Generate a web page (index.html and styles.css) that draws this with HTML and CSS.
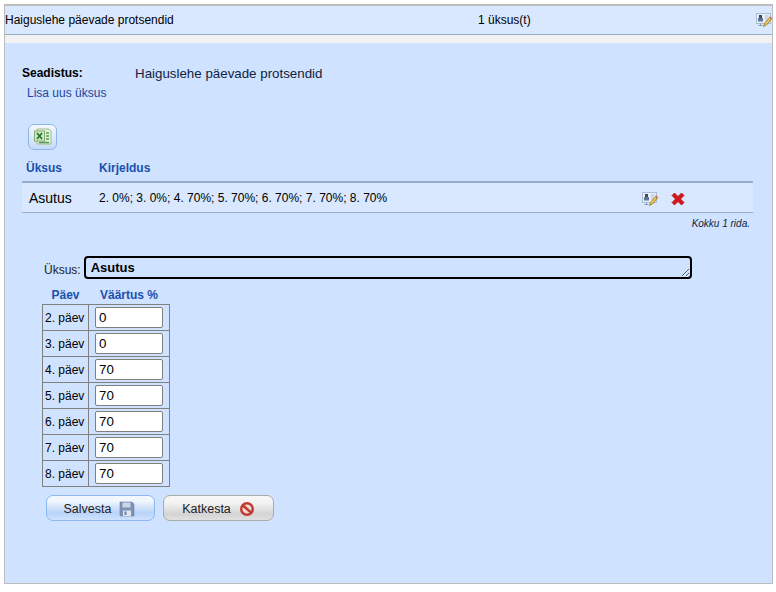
FILE: index.html
```html
<!DOCTYPE html>
<html lang="en">
<head>
    <meta charset="UTF-8">
    <title>Haiguslehe päevade protsendid</title>
    <link rel="stylesheet" href="styles.css">
</head>
<body>
    <svg class="icon-defs" width="0" height="0">
        <symbol id="edit" viewBox="0 0 16 14">
            <rect x="0.500" y="0.500" width="14" height="10" fill="#e8eff8" stroke="#a9bdd6"/>
            <rect x="3" y="2" width="3" height="3" fill="#3a4a66"/>
            <rect x="2" y="5" width="5" height="3.500" fill="#5f7392"/>
            <path d="M4.500 10.500v2M2.500 12.500h4" stroke="#8c9bb0" fill="none"/>
            <path d="M9 3h4M9 5h3M9 7h2" stroke="#b4c0cc" fill="none"/>
            <path d="M7.500 13.500l1-3 5-6 2 1.500-5 6z" fill="#f2c544" stroke="#6e5a1a" stroke-width="0.600"/>
            <path d="M14 3.500l2 1.500-0.800 1-2-1.500z" fill="#e2574c"/>
        </symbol>
    </svg>
    <div class="panel">
        <div class="panel-header">
            <span class="panel-title">Haiguslehe päevade protsendid</span>
            <span class="panel-count">1 üksus(t)</span>
            <svg class="icon-edit"><use href="#edit"/></svg>
        </div>
        <div class="panel-strip"></div>
        <div class="panel-body">
            <div class="setting">
                <span class="setting-label">Seadistus:</span>
                <span class="setting-value">Haiguslehe päevade protsendid</span>
            </div>
            <a class="add-link" href="#">Lisa uus üksus</a>
            <button class="excel-btn" type="button" title="Excel">
                <svg width="20" height="20" viewBox="0 0 20 20">
                    <path d="M4 2h12l2 2v13H4z" fill="#e6f0dc" stroke="#9fbf8e"/>
                    <rect x="1.500" y="4" width="10" height="10" fill="#d3e6c4" stroke="#86ad70"/>
                    <path d="M4 6l5 6M9 6l-5 6" stroke="#1f7a35" stroke-width="1.800" fill="none"/>
                    <path d="M13 6h3M13 9h3M13 12h3M6 15.500h10" stroke="#4f9a58" stroke-width="1.500" fill="none"/>
                </svg>
            </button>
            <div class="list-head">
                <span class="col-unit">Üksus</span>
                <span>Kirjeldus</span>
            </div>
            <div class="list-row">
                <span class="col-unit row-unit">Asutus</span>
                <span class="row-desc">2. 0%; 3. 0%; 4. 70%; 5. 70%; 6. 70%; 7. 70%; 8. 70%</span>
                <svg class="icon-edit row-icon"><use href="#edit"/></svg>
                <svg class="icon-delete row-icon" width="14" height="14" viewBox="0 0 14 14">
                    <path d="M1 3.500L3.500 1 7 4.500 10.500 1 13 3.500 9.500 7 13 10.500 10.500 13 7 9.500 3.500 13 1 10.500 4.500 7z" fill="#d5141c" stroke="#b01218" stroke-width="0.800" stroke-linejoin="round"/>
                </svg>
            </div>
            <div class="list-total">Kokku 1 rida.</div>

            <form class="edit-form">
                <div class="unit-row">
                    <label for="unit">Üksus:</label>
                    <textarea id="unit" class="unit-input" readonly>Asutus</textarea>
                </div>
                <table class="day-table">
                    <thead>
                        <tr><th>Päev</th><th>Väärtus %</th></tr>
                    </thead>
                    <tbody>
                        <tr><td>2. päev</td><td><input type="text" value="0"></td></tr>
                        <tr><td>3. päev</td><td><input type="text" value="0"></td></tr>
                        <tr><td>4. päev</td><td><input type="text" value="70"></td></tr>
                        <tr><td>5. päev</td><td><input type="text" value="70"></td></tr>
                        <tr><td>6. päev</td><td><input type="text" value="70"></td></tr>
                        <tr><td>7. päev</td><td><input type="text" value="70"></td></tr>
                        <tr><td>8. päev</td><td><input type="text" value="70"></td></tr>
                    </tbody>
                </table>
                <div class="form-buttons">
                    <button class="btn btn-save" type="button">
                        Salvesta
                        <svg width="16" height="16" viewBox="0 0 16 16">
                            <path d="M1 1h12l2 2v12H1z" fill="#7c93b5" stroke="#6a82a5" stroke-width="0.600"/>
                            <rect x="3.500" y="1.500" width="8" height="5" fill="#c9d6e6"/>
                            <rect x="4" y="9.500" width="8" height="5.500" fill="#dfe6ef"/>
                            <rect x="5.500" y="10.500" width="2" height="3.500" fill="#6a82a5"/>
                        </svg>
                    </button>
                    <button class="btn btn-cancel" type="button">
                        Katkesta
                        <svg width="16" height="16" viewBox="0 0 16 16">
                            <circle cx="8" cy="8" r="5.800" fill="#ead9d6" stroke="#c4382f" stroke-width="2.400"/>
                            <path d="M4 4.500l8 7" stroke="#c4382f" stroke-width="2.400" fill="none"/>
                        </svg>
                    </button>
                </div>
            </form>
        </div>
    </div>
</body>
</html>
```

FILE: styles.css
```css
html, body {
    margin: 0;
    padding: 0;
}
body {
    font-family: "Liberation Sans", Arial, sans-serif;
    font-size: 12px;
    color: #000;
    background-color: #fff;
    padding: 4px 3px 0 4px;
}
.icon-defs {
    position: absolute;
}
.panel {
    height: 580px;
    box-sizing: border-box;
    border: 1px solid #bdbdbd;
    border-top-width: 2px;
    display: flex;
    flex-direction: column;
}
.panel-header {
    height: 28px;
    flex: none;
    display: flex;
    align-items: center;
    background-color: #d9e8fe;
    border-bottom: 1px solid #9aaccb;
}
.panel-title {
    width: 473px;
}
.panel-count {
    width: 278px;
}
.icon-edit {
    width: 16px;
    height: 14px;
    flex: none;
}
.panel-strip {
    height: 8px;
    flex: none;
    background-color: #f2f2f2;
}
.panel-body {
    flex: 1;
    background-color: #cfe2ff;
    padding: 23px 19px 0 17px;
}
.setting {
    display: flex;
    align-items: center;
    height: 14px;
}
.setting-label {
    width: 113px;
    font-weight: bold;
}
.setting-value {
    font-size: 13.33px;
    color: #10243f;
}
.add-link {
    display: block;
    margin: 6px 0 0 5px;
    color: #24459c;
    text-decoration: none;
}
.excel-btn {
    display: flex;
    align-items: center;
    justify-content: center;
    width: 29px;
    height: 26px;
    margin: 24px 0 0 6px;
    padding: 0;
    background: linear-gradient(#f4f9ff, #c4dbf8);
    border: 1px solid #8fb6ea;
    border-radius: 6px;
}
.list-head {
    display: flex;
    height: 23px;
    align-items: flex-end;
    margin-top: 2px;
    color: #1c50ad;
    font-weight: bold;
}
.col-unit {
    width: 77px;
    padding-left: 4px;
    box-sizing: border-box;
    flex: none;
}
.list-row {
    display: flex;
    align-items: center;
    height: 29px;
    margin-top: 6px;
    background-color: #d9e8fe;
    border-top: 2px solid #9aaccb;
    border-bottom: 1px solid #9aaccb;
}
.row-unit {
    padding-left: 7px;
    font-size: 14px;
}
.row-desc {
    width: 543px;
}
.row-icon {
    margin-top: 2px;
}
.icon-delete {
    margin-left: 13px;
}
.list-total {
    text-align: right;
    font-size: 10px;
    font-style: italic;
    color: #10243f;
    margin-top: 5px;
    padding-right: 3px;
}
.edit-form {
    margin: 0;
    padding: 27px 0 0 20px;
}
.unit-row {
    display: flex;
    align-items: flex-start;
    gap: 3px;
    margin-left: 2px;
}
.unit-row label {
    padding-top: 7px;
    color: #222;
}
.unit-input {
    width: 608px;
    height: 23px;
    box-sizing: border-box;
    margin: 0;
    padding: 2px 5px;
    font-family: inherit;
    font-size: 13px;
    font-weight: bold;
    background-color: #cfe2ff;
    border: 2px solid #000;
    border-radius: 4px;
    outline: none;
    overflow: hidden;
}
.day-table {
    border-collapse: collapse;
    margin-top: 8px;
}
.day-table th {
    color: #1c50ad;
    font-size: 12px;
    height: 15px;
    padding: 0 0 2px;
}
.day-table td {
    border: 1px solid #808080;
    height: 25px;
    padding: 0;
}
.day-table td:first-child {
    width: 43px;
    padding-left: 2px;
}
.day-table td:last-child {
    width: 74px;
    padding-left: 6px;
}
.day-table input {
    display: block;
    width: 68px;
    height: 21px;
    box-sizing: border-box;
    margin: 0;
    padding: 0 3px;
    font-family: inherit;
    font-size: 13.33px;
    background-color: #fff;
    border: 1px solid #808080;
    border-radius: 2px;
}
.form-buttons {
    display: flex;
    gap: 8px;
    margin: 8px 0 0 4px;
}
.btn {
    display: flex;
    align-items: center;
    justify-content: center;
    gap: 8px;
    height: 26px;
    padding: 1px 0 0;
    font-family: inherit;
    font-size: 12.5px;
    color: #222;
    border-radius: 7px;
    cursor: pointer;
}
.btn-save {
    width: 109px;
    padding-right: 2px;
    background: linear-gradient(#f2f7fe, #f2f7fe 20%, #b9d3f8 70%, #cfe2fc);
    border: 1px solid #8db8f0;
}
.btn-cancel {
    width: 111px;
    background: linear-gradient(#f8f8f8, #f2f2f2 30%, #d4d4d4 75%, #e0e0e0);
    border: 1px solid #aaa;
}
```
